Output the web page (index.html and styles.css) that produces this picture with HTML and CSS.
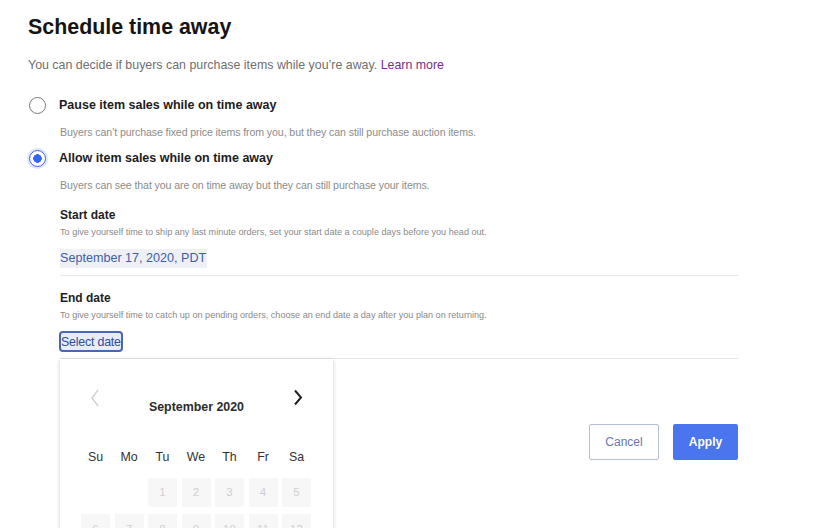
FILE: index.html
```html
<!DOCTYPE html>
<html lang="en">
<head>
<meta charset="utf-8">
<title>Schedule time away</title>
<link rel="stylesheet" href="styles.css">
</head>
<body>
<main class="page">
  <h1 class="title">Schedule time away</h1>
  <p class="intro">You can decide if buyers can purchase items while you’re away. <a class="link" href="#">Learn more</a></p>

  <div class="option">
    <span class="radio"></span>
    <span class="opt-label">Pause item sales while on time away</span>
  </div>
  <p class="opt-desc">Buyers can’t purchase fixed price items from you, but they can still purchase auction items.</p>

  <div class="option option-2">
    <span class="radio radio-on"></span>
    <span class="opt-label">Allow item sales while on time away</span>
  </div>
  <p class="opt-desc">Buyers can see that you are on time away but they can still purchase your items.</p>

  <section class="date-field">
    <h2 class="field-title">Start date</h2>
    <p class="field-desc">To give yourself time to ship any last minute orders, set your start date a couple days before you head out.</p>
    <div class="field-value"><span class="date-chip">September 17, 2020, PDT</span></div>
  </section>

  <section class="date-field end-field">
    <h2 class="field-title">End date</h2>
    <p class="field-desc">To give yourself time to catch up on pending orders, choose an end date a day after you plan on returning.</p>
    <div class="field-value"><span class="select-btn">Select date</span></div>

    <div class="calendar">
      <div class="cal-head">
        <span class="chev chev-prev"><svg width="10" height="18" viewBox="0 0 10 18"><path d="M8 1 L2 9 L8 17" fill="none" stroke="#d0d0d0" stroke-width="1.4"/></svg></span>
        <span class="cal-month">September 2020</span>
        <span class="chev chev-next"><svg width="10" height="18" viewBox="0 0 10 18"><path d="M2 1.5 L8 8.5 L2 15.5" fill="none" stroke="#222" stroke-width="2"/></svg></span>
      </div>
      <div class="cal-grid">
        <span class="wd">Su</span><span class="wd">Mo</span><span class="wd">Tu</span><span class="wd">We</span><span class="wd">Th</span><span class="wd">Fr</span><span class="wd">Sa</span>
        <span class="empty"></span><span class="empty"></span>
        <span class="day">1</span><span class="day">2</span><span class="day">3</span><span class="day">4</span><span class="day">5</span>
        <span class="day">6</span><span class="day">7</span><span class="day">8</span><span class="day">9</span><span class="day">10</span><span class="day">11</span><span class="day">12</span>
      </div>
    </div>
  </section>

  <div class="actions">
    <button class="btn btn-cancel" type="button">Cancel</button>
    <button class="btn btn-apply" type="button">Apply</button>
  </div>
</main>
</body>
</html>
```

FILE: styles.css
```css
html, body {
  margin: 0;
  padding: 0;
  background: #ffffff;
  height: 100%;
  overflow: hidden;
}
body {
  font-family: "Liberation Sans", Arial, Helvetica, sans-serif;
  color: #222;
}
.page {
  padding: 13px 0 0 28px;
  width: 710px;
}
.title {
  margin: 0;
  font-size: 21.4px;
  line-height: 28px;
  font-weight: bold;
  color: #151515;
}
.intro {
  margin: 16px 0 0;
  font-size: 12.4px;
  line-height: 16px;
  color: #6f6f6f;
}
.link {
  color: #7a2a8a;
  text-decoration: none;
}
.option {
  display: flex;
  align-items: center;
  height: 20px;
  margin-top: 22px;
}
.option-2 {
  margin-top: 9px;
}
.radio {
  box-sizing: border-box;
  width: 17px;
  height: 17px;
  border-radius: 50%;
  border: 1.5px solid #7a7a7a;
  margin-left: 1px;
  margin-right: 13px;
  background: #fff;
}
.radio-on {
  border: 1.5px solid #3d63d8;
  box-shadow: 0 0 0 2px #dfe6fa;
  background: radial-gradient(circle, #3665f3 0 4px, #fff 4.5px);
}
.opt-label {
  font-size: 12.5px;
  font-weight: bold;
  color: #1d1d1d;
}
.opt-desc {
  margin: 10px 0 0 32px;
  font-size: 10.6px;
  line-height: 14px;
  color: #8c8c8c;
  letter-spacing: -0.1px;
}
.date-field {
  margin-left: 32px;
  margin-top: 15px;
  border-bottom: 1px solid #e6e6e6;
  padding-bottom: 6px;
}
.end-field {
  position: relative;
  margin-top: 14px;
}
.field-title {
  margin: 0;
  font-size: 12px;
  line-height: 16px;
  font-weight: bold;
  color: #1e1e1e;
}
.field-desc {
  margin: 3px 0 0;
  font-size: 9.1px;
  line-height: 12px;
  color: #8a8a8a;
}
.field-value {
  margin-top: 10px;
  height: 21px;
  display: flex;
  align-items: center;
}
.date-chip {
  font-size: 12.6px;
  line-height: 19px;
  padding: 0 1px 0 0;
  color: #3f5eaa;
  background: #eef0f6;
}
.select-btn {
  box-sizing: border-box;
  font-size: 12.4px;
  line-height: 16px;
  height: 21px;
  padding: 1px 0 0 0;
  margin-left: -1px;
  border: 2px solid #4a67b3;
  border-radius: 4px;
  color: #2f4c9e;
  background: #e8ecf7;
  letter-spacing: -0.2px;
}
.calendar {
  position: absolute;
  left: 0;
  top: 100%;
  margin-top: 1px;
  width: 273px;
  height: 200px;
  box-sizing: border-box;
  background: #fff;
  box-shadow: 0 1px 4px rgba(0,0,0,0.22);
  padding: 30px 21px 0 21px;
}
.cal-head {
  display: flex;
  align-items: flex-start;
  justify-content: space-between;
  height: 40px;
  padding: 0 9px 0 9px;
}
.chev {
  display: flex;
  width: 10px;
  height: 18px;
}
.cal-month {
  margin-top: 11px;
  font-size: 12.4px;
  font-weight: bold;
  color: #2b2b2b;
}
.cal-grid {
  margin-top: 20px;
  display: grid;
  grid-template-columns: repeat(7, 29px);
  column-gap: 4.5px;
  row-gap: 7.5px;
}
.wd {
  text-align: center;
  font-size: 12.4px;
  line-height: 16px;
  color: #333;
  margin-bottom: 5px;
}
.day, .empty {
  height: 29px;
}
.day {
  display: flex;
  align-items: center;
  justify-content: center;
  background: #f7f7f7;
  color: #cfcfcf;
  font-size: 11.5px;
}
.actions {
  display: flex;
  justify-content: flex-end;
  gap: 14px;
  margin-top: 65px;
}
.btn {
  font-family: "Liberation Sans", Arial, sans-serif;
  font-size: 12px;
  height: 36px;
  cursor: pointer;
}
.btn-cancel {
  width: 70px;
  background: #fff;
  border: 1.5px solid #b9bfd4;
  border-radius: 2px;
  color: #6877ae;
}
.btn-apply {
  width: 65px;
  background: #4b75ee;
  border: none;
  border-radius: 2px;
  color: #fff;
  font-weight: bold;
}
```
